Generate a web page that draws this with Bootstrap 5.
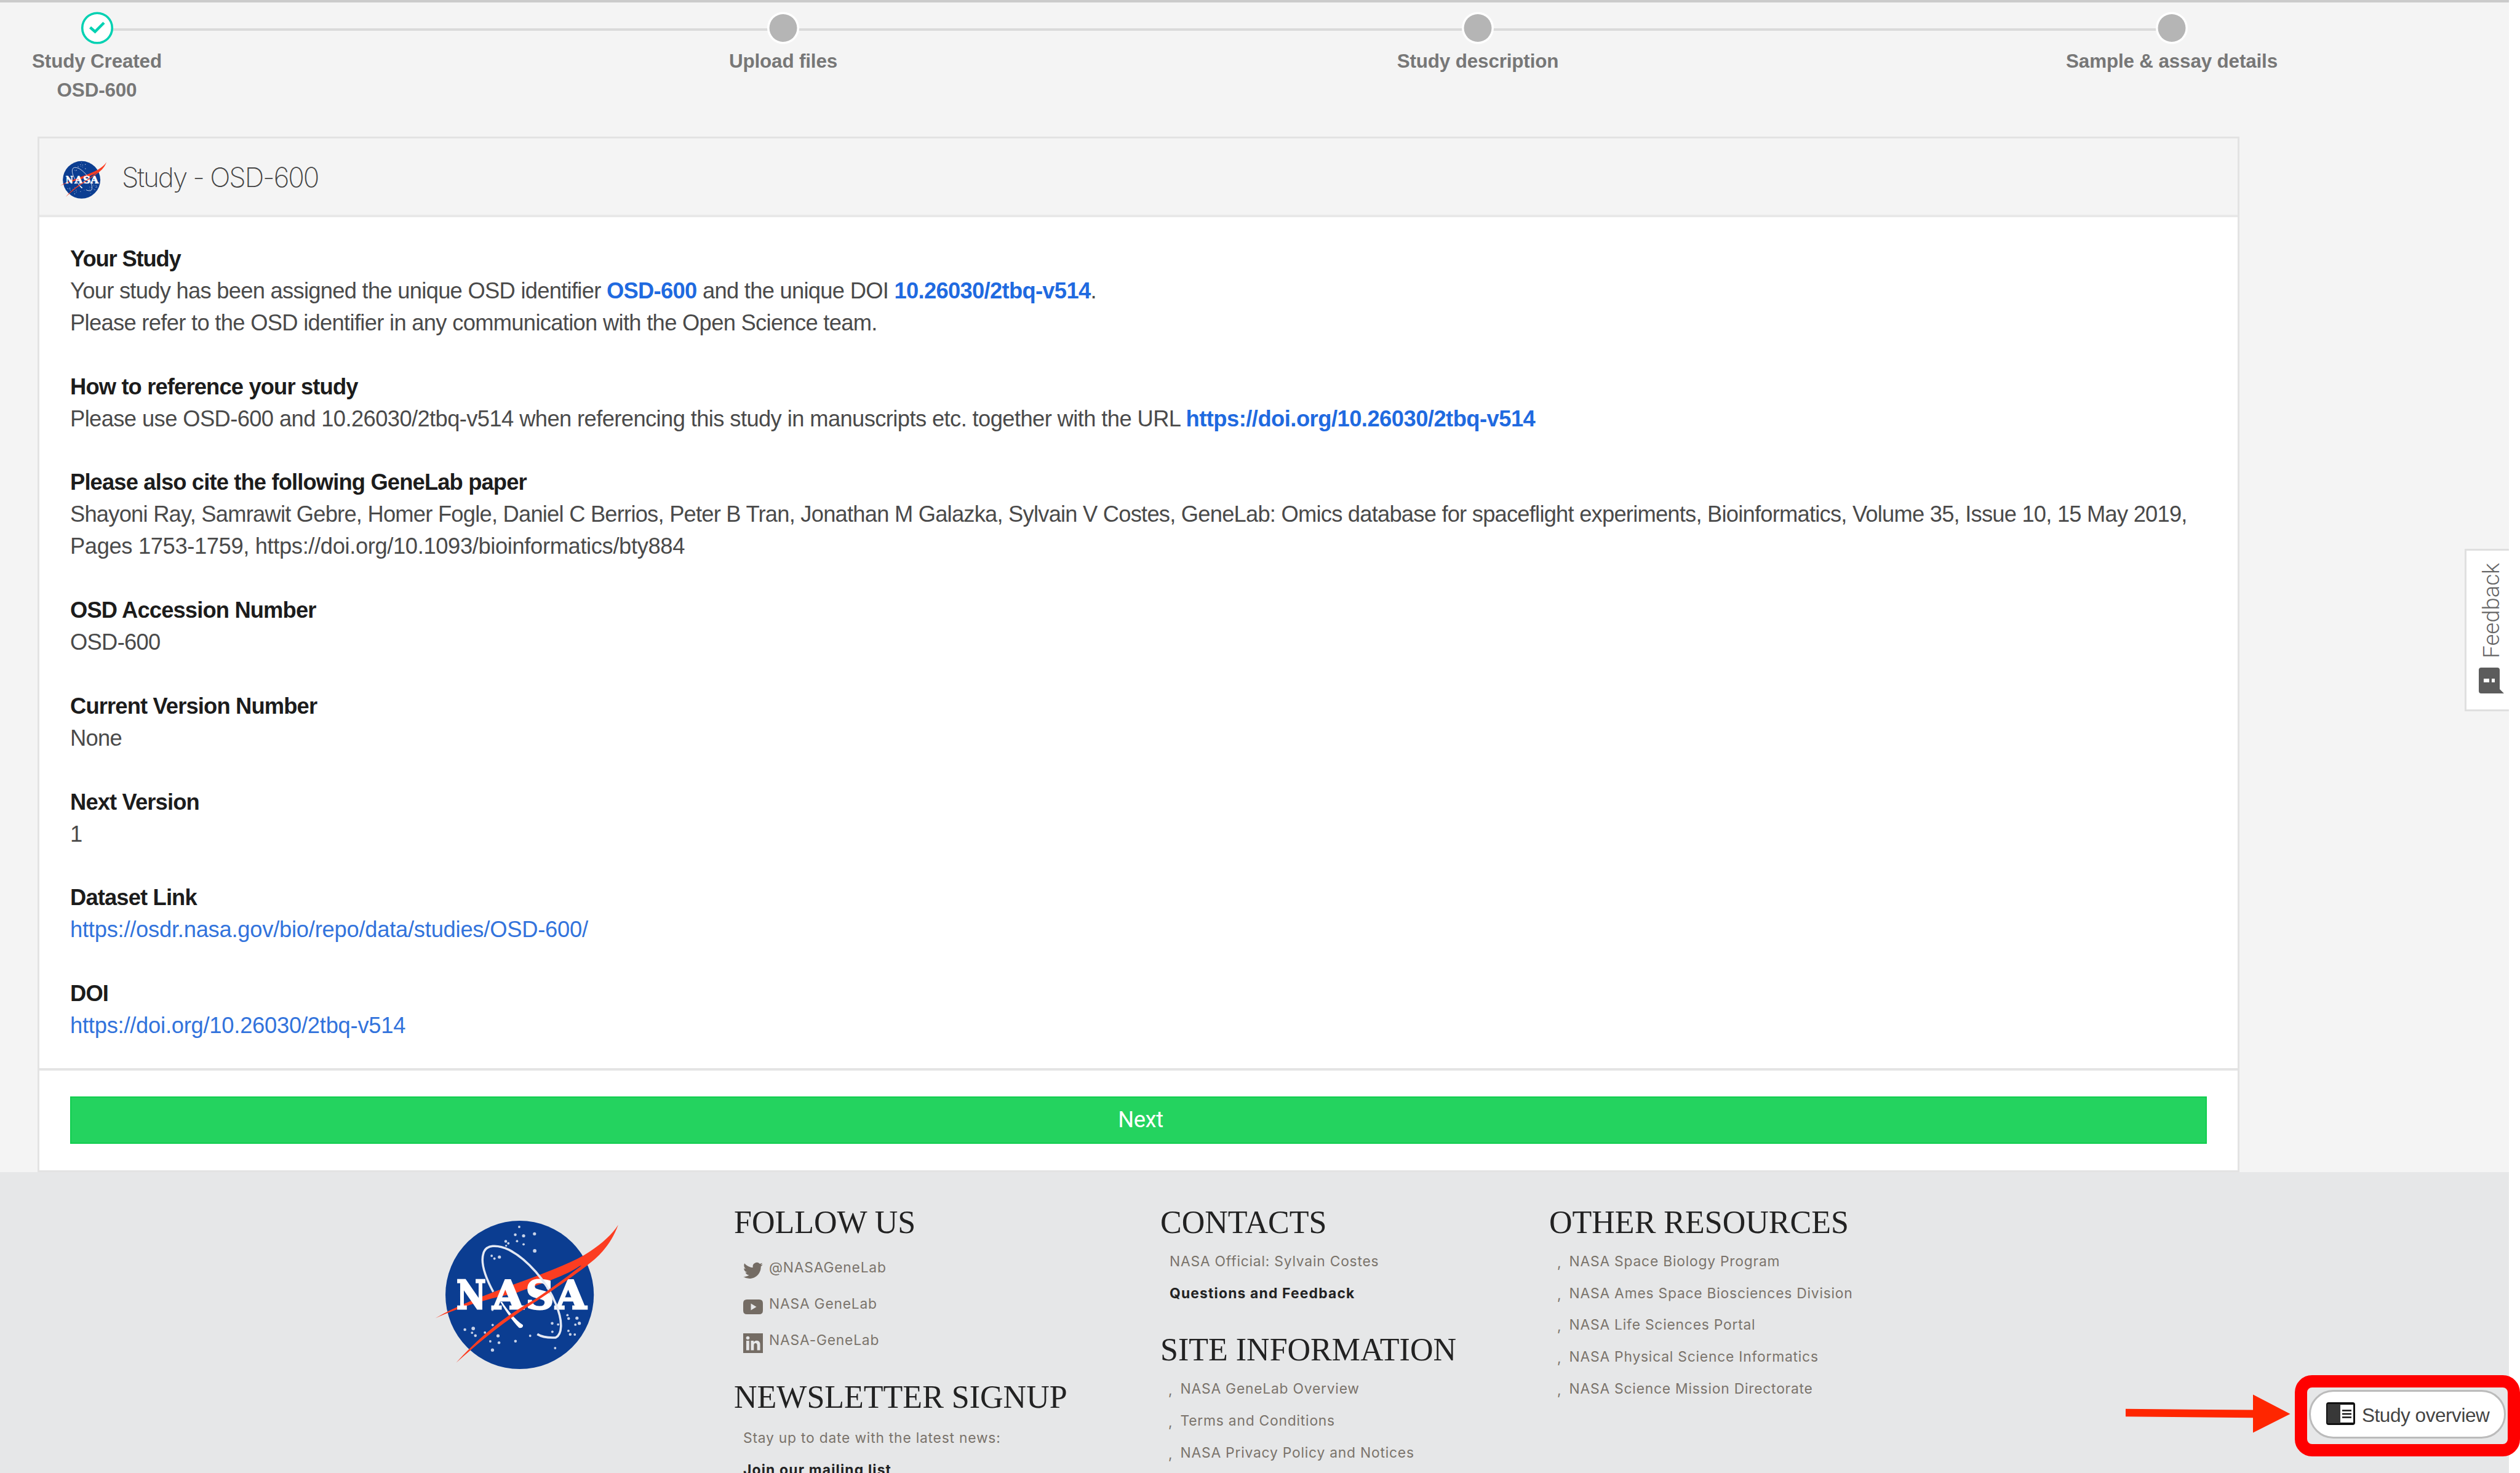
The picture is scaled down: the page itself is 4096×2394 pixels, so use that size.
<!DOCTYPE html>
<html lang="en">
<head>
<meta charset="utf-8">
<meta name="viewport" content="width=device-width, initial-scale=1">
<title>Study - OSD-600</title>
<link href="https://cdn.jsdelivr.net/npm/bootstrap@5.3.0/dist/css/bootstrap.min.css" rel="stylesheet">
<style>
html,body{margin:0;height:2394px;overflow:hidden;background:#fff}
body{font-family:"Liberation Sans",Arial,sans-serif;font-size:36.33px;line-height:51.92px;color:#4a4a4a}
.app{width:4078px;height:2394px;background:#f4f4f4;border-top:4px solid #cbcbcb;overflow:hidden}
.steps-bar{display:grid;grid-template-columns:315px 800.5px 315px 814px 315px 813px 315px;height:218px;padding-top:14px}
.steps-bar::before{content:"";position:absolute;left:158px;width:3372px;top:46px;height:4px;background:#dadada}
.step-item{position:relative;font-weight:700;font-size:31.4px;line-height:47.4px;letter-spacing:-.15px;color:#777;white-space:nowrap}
.step-item:nth-child(2){grid-column:3}.step-item:nth-child(3){grid-column:5}.step-item:nth-child(4){grid-column:7;margin:0 -30px}
.step-dot{width:54px;height:54px;margin-bottom:4px}
.study-card{margin-left:61px;width:3579px;border:3px solid #e3e3e3;border-radius:0;background:#fff}
.study-head{height:128px;background:#f4f4f4;border-bottom:4px solid #e8e8e8;border-radius:0!important;padding:0 0 0 26px}
.study-head svg{margin-top:7px}
.study-title{font-family:Inter,sans-serif;font-weight:200;font-size:44px;letter-spacing:-2.05px;color:#444;margin:4px 0 0 20px}
.study-body{padding:42px 50px 43px;color:#4a4a4a;letter-spacing:-.69px}
.study-body dl{margin:0 0 51.92px}
.study-body dl:last-child{margin:0}
.study-body dt{color:#1c1c1c;letter-spacing:-.85px}
.study-body dl:first-child dt{letter-spacing:-1.15px}
.study-body dd{margin:0}
.study-body a{color:#3273dc;text-decoration:none}
.study-body a.fw-bold{color:#1f6ae0;letter-spacing:-.52px}
.study-body .track-0{letter-spacing:-.72px}
.study-body .track-0 a.fw-bold{letter-spacing:-.68px}
.track-a{letter-spacing:-.6px}
.track-b{letter-spacing:-.78px}
.track-c{letter-spacing:-.37px}
.track-d{letter-spacing:-.24px}
.study-foot{background:#fff;border-top:4px solid #e4e4e4;padding:42px 50px 43px}
.btn-next{height:77px;background:#24d35f;color:#fff;border:0;border-radius:0;font-family:Roboto,sans-serif;font-size:36.3px;letter-spacing:-.4px;padding:0 0 0 7px;box-shadow:inset 0 0 0 2px #10cd4e}
.site-foot{height:490px;background:#e6e7e8;display:grid;grid-template-columns:516px 693px 632px 1fr;padding:52px 0 0 677px;font-family:Inter,sans-serif;font-size:22.8px;line-height:51.7px;letter-spacing:.79px;color:#7a736b;white-space:nowrap}
.foot-logo{margin:-4px 0 0 -1px}
.site-foot h2{font-family:"Liberation Serif",serif;font-size:52px;line-height:60px;letter-spacing:0;margin:0 0 7px;color:#222;font-weight:400}
.site-foot h2.h-follow{margin-bottom:14px}
.site-foot h2.h-news{margin:34px 0 10px}
.site-foot h2.h-site{margin-top:37px}
.site-foot p{margin:0 0 0 15px}
.site-foot ul{list-style:none;margin:0 0 0 14px;padding:0}
.site-foot li{display:flex}
.site-foot li::before{content:",";width:18.500px;position:relative;top:2px;left:-1px}
.site-foot strong{color:#222;letter-spacing:1.2px}
.social-row{height:58.7px;margin-left:15px;gap:10px}
.social-row svg{width:32px;height:32px;margin-top:10px;fill:#746c64}
.feedback-tab{position:absolute;left:4006px;top:892px;width:72px;height:264px;background:#fff;border:3px solid #dfdfdf;border-right:0}
.feedback-tab span{position:absolute;left:11px;top:20px;writing-mode:vertical-rl;transform:rotate(180deg);font-family:Roboto,sans-serif;font-weight:300;font-size:36.5px;line-height:60px;color:#666}
.feedback-tab svg{position:absolute;left:19px;top:189px}
.callout{position:absolute;left:3730px;top:2235px;width:366px;height:132px;border:20px solid #f00;border-radius:28px}
.overview-pill{position:absolute;left:3753px;top:2259px;width:320px;height:79px;border:3px solid #bbb;border-radius:40px;background:#fff;color:#444;font-size:31.5px;letter-spacing:-.45px;padding:0 0 0 25px;gap:11px;white-space:nowrap}
.overview-pill span{margin-top:5px}
.overview-pill svg{margin-top:-2px}
.arrow{position:absolute;left:3450px;top:2260px}
</style>
<script src="https://cdn.jsdelivr.net/npm/bootstrap@5.3.0/dist/js/bootstrap.bundle.min.js"></script>
</head>
<body>
<svg width="0" height="0" class="position-absolute">
<symbol id="meatball" viewBox="0 0 1080 900">
<circle cx="523" cy="470" r="374" fill="#0b3d91"/>
<g fill="#c9d3e8"><circle cx="521" cy="127" r="6"/><circle cx="501" cy="167" r="7"/><circle cx="543" cy="172" r="8"/><circle cx="598" cy="162" r="8"/><circle cx="510" cy="199" r="6"/><circle cx="543" cy="215" r="6"/><circle cx="599" cy="248" r="9"/><circle cx="453" cy="200" r="7"/><circle cx="466" cy="210" r="6"/><circle cx="455" cy="222" r="5"/><circle cx="382" cy="273" r="6"/><circle cx="396" cy="287" r="6"/><circle cx="421" cy="279" r="8"/><circle cx="247" cy="645" r="7"/><circle cx="289" cy="639" r="9"/><circle cx="283" cy="661" r="6"/><circle cx="300" cy="675" r="7"/><circle cx="348" cy="660" r="6"/><circle cx="387" cy="622" r="6"/><circle cx="386" cy="545" r="6"/><circle cx="414" cy="676" r="8"/><circle cx="375" cy="704" r="6"/><circle cx="419" cy="711" r="7"/><circle cx="386" cy="748" r="8"/><circle cx="502" cy="703" r="7"/><circle cx="576" cy="676" r="6"/><circle cx="702" cy="738" r="6"/><circle cx="687" cy="613" r="7"/><circle cx="688" cy="656" r="6"/><circle cx="717" cy="619" r="6"/><circle cx="764" cy="572" r="6"/><circle cx="770" cy="589" r="7"/><circle cx="812" cy="587" r="8"/><circle cx="824" cy="613" r="8"/><circle cx="804" cy="620" r="6"/><circle cx="769" cy="651" r="6"/><circle cx="778" cy="669" r="7"/><circle cx="801" cy="670" r="6"/></g>
<path d="M98 588C210 520 330 480 500 415C640 362 760 320 850 268C930 220 985 170 1020 117C985 210 930 275 850 330C835 320 830 322 825 325C760 372 640 410 500 462C350 490 200 540 98 588Z" fill="#fc3d21"/>
<g font-family="DejaVu Serif, serif" font-weight="700" font-size="197" letter-spacing="0" fill="#fff" stroke="#fff" stroke-width="9">
<text x="205" y="539" textLength="148" lengthAdjust="spacingAndGlyphs">N</text><text x="386" y="539" textLength="156" lengthAdjust="spacingAndGlyphs">A</text><text x="554" y="539" textLength="142" lengthAdjust="spacingAndGlyphs">S</text><text x="703" y="539" textLength="156" lengthAdjust="spacingAndGlyphs">A</text></g>
<path d="M390 455C350 380 325 310 340 262C352 215 410 215 470 243C560 290 660 400 705 515C745 610 735 670 705 685C670 687 640 685 612 668" fill="none" stroke="#e4e9f4" stroke-width="11"/>
<path d="M425 505C450 550 490 605 520 636Q540 640 540 622C500 595 460 545 434 505Z" fill="#fff"/>
<path d="M203 812C330 670 460 570 600 492C700 425 780 365 850 310L868 318C780 385 700 440 610 500C470 585 340 690 203 812Z" fill="#fc3d21"/>
</symbol></svg>

<main class="app">
<div class="steps-bar">
 <div class="step-item text-center"><svg class="step-dot d-block mx-auto" viewBox="0 0 54 54"><circle cx="27" cy="27.500" r="24.300" fill="#fff" stroke="#00d1b2" stroke-width="3.600"/><path d="M15.500 26.500L23.500 33.500L38 19" fill="none" stroke="#00d1b2" stroke-width="4.500"/></svg>Study Created<br>OSD-600</div>
 <div class="step-item text-center"><svg class="step-dot d-block mx-auto" viewBox="0 0 54 54"><circle cx="27" cy="27.500" r="26" fill="#fff"/><circle cx="27" cy="27.500" r="22.500" fill="#b5b5b5"/></svg>Upload files</div>
 <div class="step-item text-center"><svg class="step-dot d-block mx-auto" viewBox="0 0 54 54"><circle cx="27" cy="27.500" r="26" fill="#fff"/><circle cx="27" cy="27.500" r="22.500" fill="#b5b5b5"/></svg>Study description</div>
 <div class="step-item text-center"><svg class="step-dot d-block mx-auto" viewBox="0 0 54 54"><circle cx="27" cy="27.500" r="26" fill="#fff"/><circle cx="27" cy="27.500" r="22.500" fill="#b5b5b5"/></svg>Sample &amp; assay details</div>
</div>
<section class="card study-card">
 <div class="card-header study-head d-flex align-items-center">
  <svg width="88" height="73.400"><use href="#meatball"/></svg>
  <span class="study-title">Study - OSD-600</span>
 </div>
 <div class="card-body study-body">
  <dl><dt>Your Study</dt><dd class="track-0">Your study has been assigned the unique OSD identifier <a href="#" class="fw-bold">OSD-600</a> and the unique DOI <a href="#" class="fw-bold">10.26030/2tbq-v514</a>.</dd><dd>Please refer to the OSD identifier in any communication with the Open Science team.</dd></dl>
  <dl><dt>How to reference your study</dt><dd class="track-a">Please use OSD-600 and 10.26030/2tbq-v514 when referencing this study in manuscripts etc. together with the URL <a href="#" class="fw-bold">https://doi.org/10.26030/2tbq-v514</a></dd></dl>
  <dl><dt>Please also cite the following GeneLab paper</dt><dd class="track-b text-nowrap">Shayoni Ray, Samrawit Gebre, Homer Fogle, Daniel C Berrios, Peter B Tran, Jonathan M Galazka, Sylvain V Costes, GeneLab: Omics database for spaceflight experiments, Bioinformatics, Volume 35, Issue 10, 15 May 2019,</dd><dd class="track-c">Pages 1753-1759, https://doi.org/10.1093/bioinformatics/bty884</dd></dl>
  <dl><dt>OSD Accession Number</dt><dd>OSD-600</dd></dl>
  <dl><dt>Current Version Number</dt><dd>None</dd></dl>
  <dl><dt>Next Version</dt><dd>1</dd></dl>
  <dl><dt>Dataset Link</dt><dd><a href="#" class="track-d">https://osdr.nasa.gov/bio/repo/data/studies/OSD-600/</a></dd></dl>
  <dl><dt>DOI</dt><dd><a href="#" class="track-d">https://doi.org/10.26030/2tbq-v514</a></dd></dl>
 </div>
 <div class="card-footer study-foot"><button class="btn btn-next w-100" type="button">Next</button></div>
</section>
<footer class="site-foot">
 <div><svg width="348.200" height="290.200" class="d-block foot-logo"><use href="#meatball"/></svg></div>
 <div>
  <h2 class="h-follow">FOLLOW US</h2>
  <div class="social-row d-flex align-items-center"><svg viewBox="0 0 24 24"><path d="M24 4.557a9.830 9.830 0 0 1-2.828.775 4.932 4.932 0 0 0 2.165-2.724 9.864 9.864 0 0 1-3.127 1.195 4.916 4.916 0 0 0-8.384 4.482C7.691 8.094 4.066 6.130 1.640 3.161a4.822 4.822 0 0 0-.666 2.475c0 1.710.870 3.213 2.188 4.096a4.904 4.904 0 0 1-2.228-.616v.061a4.923 4.923 0 0 0 3.946 4.827 4.996 4.996 0 0 1-2.212.085 4.936 4.936 0 0 0 4.604 3.417A9.867 9.867 0 0 1 0 19.539a13.995 13.995 0 0 0 7.548 2.212c9.142 0 14.307-7.721 13.995-14.646A10.025 10.025 0 0 0 24 4.557z"/></svg><span>@NASAGeneLab</span></div>
  <div class="social-row d-flex align-items-center"><svg viewBox="0 0 32 32"><path fill-rule="evenodd" d="M6 4H26Q32 4 32 10V22Q32 28 26 28H6Q0 28 0 22V10Q0 4 6 4ZM12.500 10.500V21.500L21.500 16Z"/></svg><span>NASA GeneLab</span></div>
  <div class="social-row d-flex align-items-center"><svg viewBox="0 0 32 32"><rect width="32" height="32"/><g fill="#e6e7e8"><circle cx="7.500" cy="7.500" r="2.800"/><rect x="5" y="12" width="4.800" height="15.500"/><path d="M12.500 12H17V14.200Q18.500 11.700 21.800 11.700Q27.500 11.700 27.500 18.500V27.500H22.700V19.500Q22.700 16 20 16Q17.300 16 17.300 19.500V27.500H12.500Z"/></g></svg><span>NASA-GeneLab</span></div>
  <h2 class="h-news">NEWSLETTER SIGNUP</h2>
  <p>Stay up to date with the latest news:</p>
  <p><strong>Join our mailing list</strong></p>
 </div>
 <div>
  <h2>CONTACTS</h2>
  <p>NASA Official: Sylvain Costes</p>
  <p><strong>Questions and Feedback</strong></p>
  <h2 class="h-site">SITE INFORMATION</h2>
  <ul><li>NASA GeneLab Overview</li><li>Terms and Conditions</li><li>NASA Privacy Policy and Notices</li></ul>
 </div>
 <div>
  <h2>OTHER RESOURCES</h2>
  <ul><li>NASA Space Biology Program</li><li>NASA Ames Space Biosciences Division</li><li>NASA Life Sciences Portal</li><li>NASA Physical Science Informatics</li><li>NASA Science Mission Directorate</li></ul>
 </div>
</footer>
</main>
<aside class="feedback-tab"><span>Feedback</span><svg width="44" height="44" viewBox="0 0 44 44"><path d="M5 1H31Q35 1 35 5V36L42 43H5Q1 43 1 39V5Q1 1 5 1Z" fill="#5c5c5c"/><path d="M9 19h9v6H9zM22 19h5v6h-5z" fill="#fff"/></svg></aside>
<svg class="arrow" width="280" height="80"><path d="M5 29.700L212 31.600V6.500L272.500 38L212 68.600V44.200L5 42.200Z" fill="#ff2600"/></svg>
<button type="button" class="overview-pill d-flex align-items-center"><svg width="47" height="37" viewBox="0 0 47 37"><rect width="47" height="37" rx="4" fill="#111"/><rect x="2" y="3" width="21" height="31" fill="#383838"/><rect x="23" y="4" width="21" height="29" fill="#fff"/><path d="M26 13.500H41M26 19H41M26 24.500H41" stroke="#111" stroke-width="2.600"/></svg><span>Study overview</span></button>
<div class="callout"></div>
</body>
</html>
